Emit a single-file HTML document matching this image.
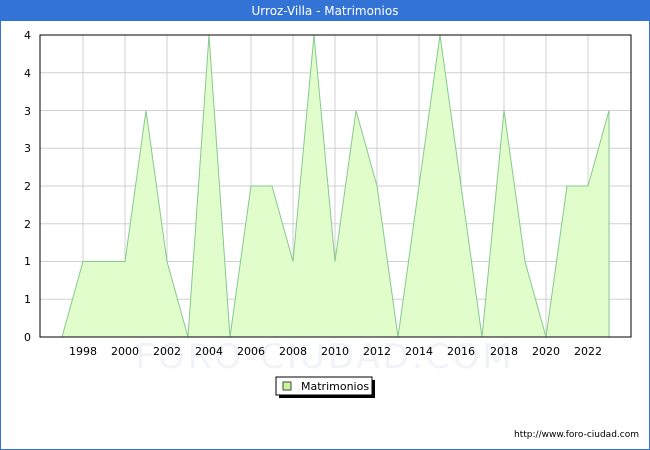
<!DOCTYPE html>
<html><head><meta charset="utf-8"><style>
body{margin:0;width:650px;height:450px;overflow:hidden;background:#fff;font-family:"DejaVu Sans","Liberation Sans",sans-serif;}
.frame{position:absolute;left:0;top:0;width:648px;height:448px;border:1px solid #3473d6;}
.title{position:absolute;left:0;top:0;width:650px;height:21px;background:#3473d6;color:#fff;font-size:12px;text-align:center;line-height:22px;}
</style></head><body>
<div class="frame"></div>
<div class="title">Urroz-Villa - Matrimonios</div>
<svg width="650" height="450" style="position:absolute;left:0;top:0" font-family="DejaVu Sans, Liberation Sans, sans-serif" font-size="11">
<g stroke="#d0d0d0" stroke-width="1">
<line x1="40" y1="72.75" x2="631" y2="72.75"/><line x1="40" y1="110.5" x2="631" y2="110.5"/><line x1="40" y1="148.25" x2="631" y2="148.25"/><line x1="40" y1="186" x2="631" y2="186"/><line x1="40" y1="223.75" x2="631" y2="223.75"/><line x1="40" y1="261.5" x2="631" y2="261.5"/><line x1="40" y1="299.25" x2="631" y2="299.25"/>
<line x1="83" y1="35" x2="83" y2="337"/><line x1="125" y1="35" x2="125" y2="337"/><line x1="167" y1="35" x2="167" y2="337"/><line x1="209" y1="35" x2="209" y2="337"/><line x1="251" y1="35" x2="251" y2="337"/><line x1="293" y1="35" x2="293" y2="337"/><line x1="335" y1="35" x2="335" y2="337"/><line x1="377" y1="35" x2="377" y2="337"/><line x1="419" y1="35" x2="419" y2="337"/><line x1="461" y1="35" x2="461" y2="337"/><line x1="504" y1="35" x2="504" y2="337"/><line x1="546" y1="35" x2="546" y2="337"/><line x1="588" y1="35" x2="588" y2="337"/>
</g>
<text x="325" y="368" font-size="34" fill="#f1f3f8" text-anchor="middle" letter-spacing="3">FORO-CIUDAD.COM</text>
<polygon fill="#e2fdcc" stroke="#86c98e" stroke-width="1" points="62,337 83,261.5 104,261.5 125,261.5 146,110.5 167,261.5 188,337 209,35 230,337 251,186 272,186 293,261.5 314,35 335,261.5 356,110.5 377,186 398,337 419,186 440,35 461,186 482,337 504,110.5 525,261.5 546,337 567,186 588,186 609,110.5 609,337"/>
<rect x="40" y="35" width="591" height="302" fill="none" stroke="#000" stroke-width="1"/>
<g text-anchor="end" fill="#000">
<text x="31" y="341">0</text><text x="31" y="303">1</text><text x="31" y="265">1</text><text x="31" y="228">2</text><text x="31" y="190">2</text><text x="31" y="152">3</text><text x="31" y="115">3</text><text x="31" y="77">4</text><text x="31" y="39">4</text>
</g>
<g text-anchor="middle" fill="#000">
<text x="83" y="355">1998</text><text x="125" y="355">2000</text><text x="167" y="355">2002</text><text x="209" y="355">2004</text><text x="251" y="355">2006</text><text x="293" y="355">2008</text><text x="335" y="355">2010</text><text x="377" y="355">2012</text><text x="419" y="355">2014</text><text x="461" y="355">2016</text><text x="504" y="355">2018</text><text x="546" y="355">2020</text><text x="588" y="355">2022</text>
</g>
<rect x="279" y="380" width="96" height="18" fill="#000"/>
<rect x="276" y="377" width="96" height="18" fill="#fff" stroke="#000" stroke-width="1"/>
<rect x="283" y="382" width="8" height="8" fill="#c6f59c" stroke="#444" stroke-width="1"/>
<text x="301" y="390" fill="#000">Matrimonios</text>
<text x="639" y="437" text-anchor="end" font-size="9" fill="#000">http://www.foro-ciudad.com</text>
</svg>
</body></html>
